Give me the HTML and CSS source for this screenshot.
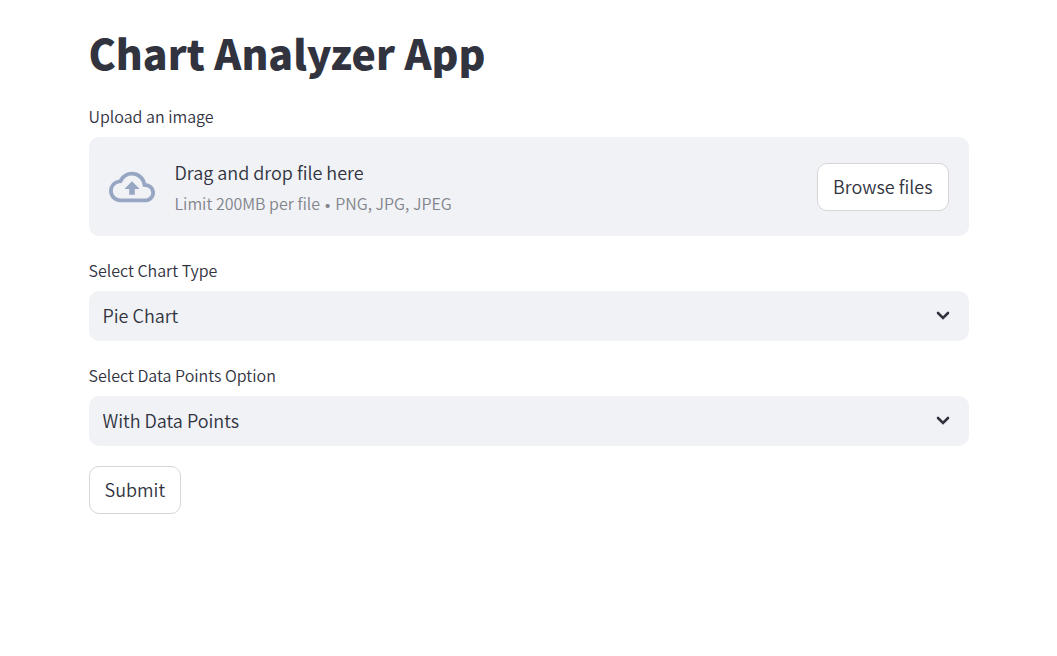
FILE: index.html
```html
<!DOCTYPE html>
<html lang="en">
<head>
<meta charset="utf-8">
<meta name="viewport" content="width=device-width, initial-scale=1">
<title>Chart Analyzer App</title>
<link rel="stylesheet" href="styles.css">
</head>
<body>
<main class="page">
  <h1 class="title">Chart Analyzer App</h1>
  <form class="form">
    <div class="field">
      <label class="label" for="browse">Upload an image</label>
      <section class="dropzone">
        <svg class="cloud" viewBox="0 0 24 24" aria-hidden="true"><path d="M19.35 10.04A7.49 7.49 0 0012 4C9.11 4 6.6 5.64 5.35 8.04A5.994 5.994 0 000 14c0 3.31 2.69 6 6 6h13c2.76 0 5-2.24 5-5 0-2.64-2.05-4.78-4.65-4.96zM19 18H6c-2.21 0-4-1.79-4-4 0-2.05 1.53-3.76 3.56-3.97l1.07-.11.5-.95A5.469 5.469 0 0112 6c2.62 0 4.88 1.86 5.39 4.43l.3 1.5 1.53.11A2.98 2.98 0 0122 15c0 1.65-1.35 3-3 3zM8 13h2.55v3h2.9v-3H16l-4-4-4 4z"/></svg>
        <div class="instructions">
          <span class="prompt">Drag and drop file here</span>
          <small class="limit">Limit 200MB per file <span class="bullet">•</span> PNG, JPG, JPEG</small>
        </div>
        <button class="button" id="browse" type="button">Browse files</button>
      </section>
    </div>
    <div class="field">
      <label class="label" for="chart-type">Select Chart Type</label>
      <div class="select-box">
        <select class="select" id="chart-type"><option>Pie Chart</option></select>
        <svg class="chevron" viewBox="0 0 14 10" aria-hidden="true"><path d="M2 2l5 5 5-5"/></svg>
      </div>
    </div>
    <div class="field">
      <label class="label" for="data-points">Select Data Points Option</label>
      <div class="select-box">
        <select class="select" id="data-points"><option>With Data Points</option></select>
        <svg class="chevron" viewBox="0 0 14 10" aria-hidden="true"><path d="M2 2l5 5 5-5"/></svg>
      </div>
    </div>
    <button class="button submit" type="button">Submit</button>
  </form>
</main>
</body>
</html>
```
FILE: styles.css
```css
* {
  box-sizing: border-box;
}

body {
  margin: 0;
  background: #fff;
  color: #31333f;
  font-family: "Source Sans Pro", "Noto Sans CJK SC", sans-serif;
  font-size: 18px;
  font-weight: 350;
  line-height: 32px;
}

.page {
  max-width: 920px;
  margin: 0 auto;
  padding: 20px;
}

.title {
  margin: 0 0 18px;
  font-size: 41px;
  font-weight: 900;
  line-height: 64px;
}

.form {
  display: flex;
  flex-direction: column;
  align-items: flex-start;
  gap: 20px;
}

.field {
  display: flex;
  flex-direction: column;
  width: 100%;
}

.label {
  margin-bottom: 7px;
  font-size: 16px;
  line-height: 28px;
}

.dropzone {
  display: flex;
  align-items: center;
  min-height: 99px;
  padding: 18px 20px;
  border-radius: 10px;
  background: #f0f2f6;
}

.cloud {
  flex: none;
  width: 46px;
  height: 46px;
  margin-right: 20px;
  fill: #97a6c3;
}

.instructions {
  display: flex;
  flex: 1;
  flex-direction: column;
}

.prompt {
  line-height: 32px;
}

.limit {
  color: #83858c;
  font-size: 16px;
  line-height: 30px;
}

.bullet {
  font-family: Lato, sans-serif;
  font-size: 14px;
  line-height: 1;
}

.button {
  height: 48px;
  padding: 0 15px 2px;
  border: 1px solid #d6d6d9;
  border-radius: 10px;
  background: #fff;
  color: inherit;
  font: inherit;
}

.select-box {
  display: grid;
  align-items: center;
}

.select {
  grid-area: 1 / 1;
  width: 100%;
  height: 50px;
  padding: 0 48px 2px 14px;
  border: 0;
  border-radius: 10px;
  background: #f0f2f6;
  color: inherit;
  font: inherit;
  appearance: none;
}

.chevron {
  grid-area: 1 / 1;
  justify-self: end;
  width: 14px;
  height: 10px;
  margin-right: 19px;
  fill: none;
  stroke: #31333f;
  stroke-width: 2.6;
  stroke-linecap: round;
  pointer-events: none;
}
```
